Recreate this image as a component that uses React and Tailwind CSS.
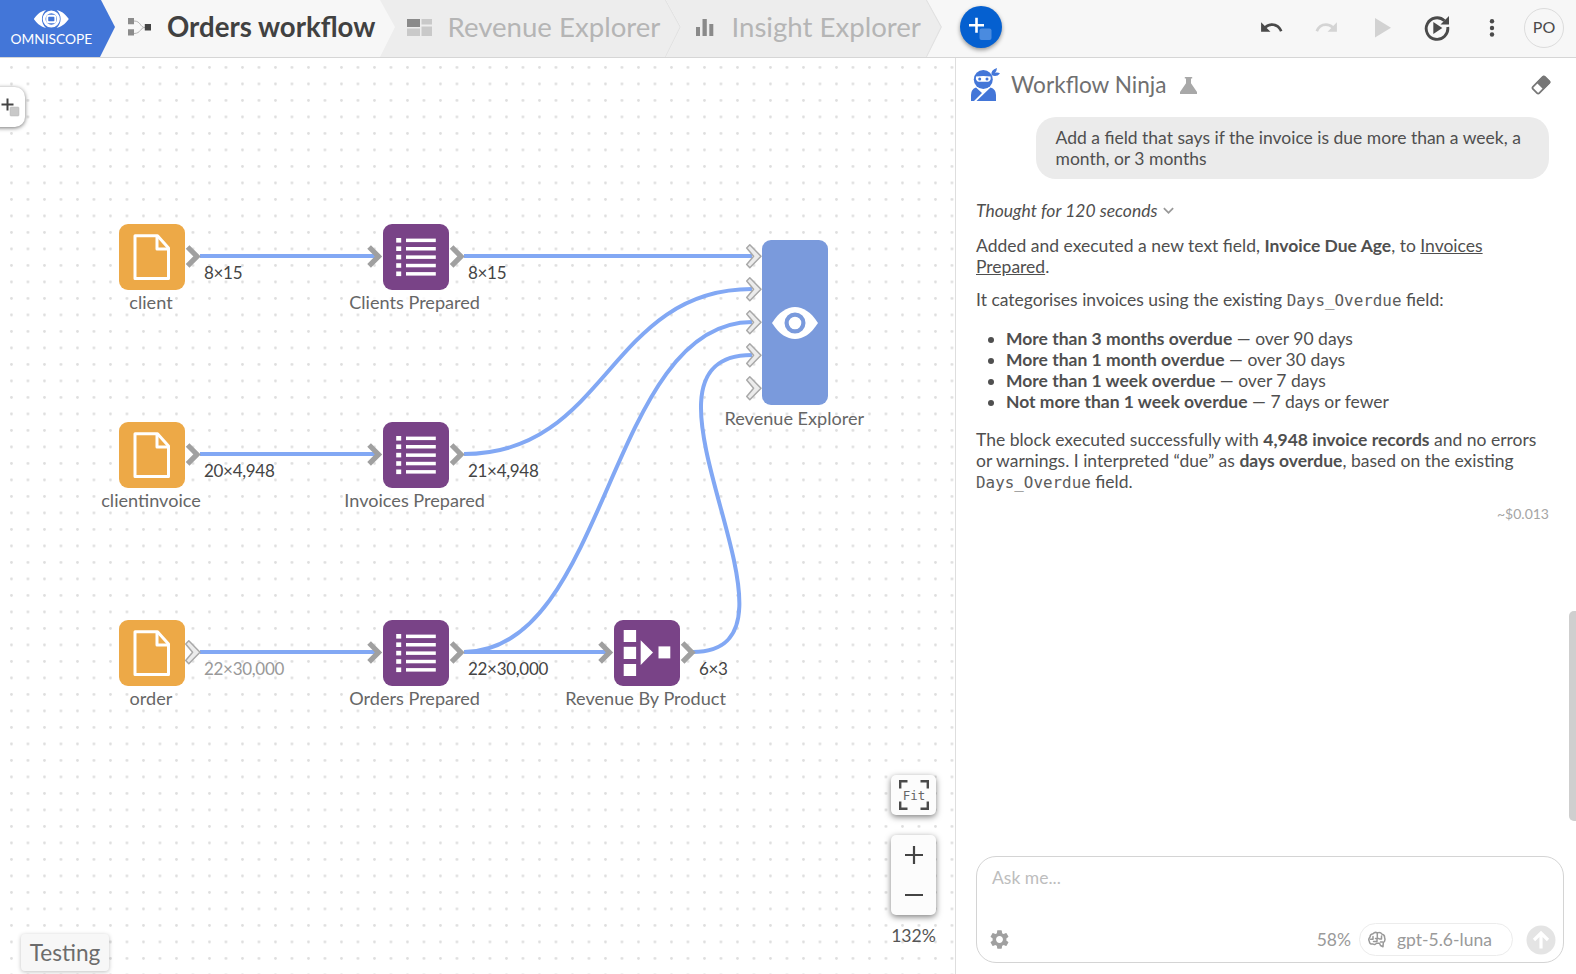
import { MdUndo, MdRedo, MdSettings, MdKeyboardArrowDown } from 'react-icons/md'

const BLUE_LINE = '#82a8f4'

const nodes = [
  { id: 'client', label: 'client', kind: 'file', x: 119, y: 224 },
  { id: 'clientinvoice', label: 'clientinvoice', kind: 'file', x: 119, y: 422 },
  { id: 'order', label: 'order', kind: 'file', x: 119, y: 620 },
  { id: 'clients', label: 'Clients Prepared', kind: 'list', x: 382.6, y: 224 },
  { id: 'invoices', label: 'Invoices Prepared', kind: 'list', x: 382.6, y: 422 },
  { id: 'orders', label: 'Orders Prepared', kind: 'list', x: 382.6, y: 620 },
  { id: 'product', label: 'Revenue By Product', kind: 'aggregate', x: 613.6, y: 620 },
]

const edges = [
  'M200 256H376',
  'M200 454H376',
  'M200 652H376',
  'M464 256H752',
  'M464 652H607',
  'M464 454C608 454 608 289 752 289',
  'M464 652C608 652 608 322 752 322',
  'M693 652C829 652 608 355 752 355',
]

const ports = [
  { x: 186, y: 256 },
  { x: 186, y: 454 },
  { x: 186, y: 652, open: true },
  { x: 367.5, y: 256 },
  { x: 367.5, y: 454 },
  { x: 367.5, y: 652 },
  { x: 450, y: 256 },
  { x: 450, y: 454 },
  { x: 450, y: 652 },
  { x: 598.5, y: 652 },
  { x: 681, y: 652 },
  { x: 747, y: 256, open: true },
  { x: 747, y: 289, open: true },
  { x: 747, y: 322, open: true },
  { x: 747, y: 355, open: true },
  { x: 747, y: 388, open: true },
]

const counts = [
  { text: '8×15', x: 204, y: 262 },
  { text: '20×4,948', x: 204, y: 460 },
  { text: '22×30,000', x: 204, y: 658, faded: true },
  { text: '8×15', x: 468, y: 262 },
  { text: '21×4,948', x: 468, y: 460 },
  { text: '22×30,000', x: 468, y: 658 },
  { text: '6×3', x: 699, y: 658 },
]

function NodeIcon({ kind }) {
  if (kind === 'file') {
    return (
      <svg width="66" height="66" fill="none" stroke="#fff" strokeWidth="3" strokeLinejoin="round">
        <path d="M16 11.7h22.5L49.5 24v30.6H16z" />
        <path d="M38 12v13h11.5" />
      </svg>
    )
  }
  if (kind === 'list') {
    return (
      <svg width="66" height="66" fill="#fff">
        {[14, 22.4, 30.8, 39.2, 47.5].map((y) => (
          <g key={y}>
            <rect x="13.2" y={y} width="5" height="4.6" />
            <rect x="23" y={y + 0.6} width="29.8" height="3.5" />
          </g>
        ))}
      </svg>
    )
  }
  return (
    <svg width="66" height="66" fill="#fff">
      <rect x="9.7" y="10" width="12.4" height="12" />
      <rect x="9.7" y="26.8" width="12.4" height="12.2" />
      <rect x="9.7" y="44" width="12.4" height="12" />
      <path d="M26.7 20.3 39 32.6 26.7 45z" />
      <rect x="44.5" y="26.4" width="11.8" height="12" />
    </svg>
  )
}

function Port({ x, y, open }) {
  if (open) {
    return (
      <path
        transform={`translate(${x} ${y})`}
        d="M2.8 -11.2 14 0.3 2.8 11.8 -0.3 8.6 6.6 0.3 -0.3 -8z"
        fill="#ececec"
        stroke="#a9a9a9"
        strokeWidth="1.5"
        strokeLinejoin="round"
      />
    )
  }
  return (
    <path
      transform={`translate(${x} ${y})`}
      d="M1.6 -9 11 0.4 1.6 9.8"
      fill="none"
      stroke="#a0a0a0"
      strokeWidth="5.2"
    />
  )
}

function AddIcon({ plus, square }) {
  return (
    <svg width="24" height="24" fill="none">
      <path d="M1 9.3h15M8.5 1.8v15" stroke={plus} strokeWidth="2.6" />
      <rect x="11.5" y="12.5" width="12" height="11.500" rx="2" fill={square} />
    </svg>
  )
}

// Right edge of a breadcrumb tab
function TabEdge() {
  return (
    <svg className="absolute right-0 top-0" width="16" height="57" fill="none">
      <path d="M.5 0 15.3 27 .5 57" stroke="#e1e1e1" strokeWidth="1.2" />
    </svg>
  )
}

function Header() {
  return (
    <header className="flex h-[58px] shrink-0 items-start border-b border-[#d6d6d6] bg-[#f7f7f7]">
      <div className="flex h-[57px] w-[115px] shrink-0 flex-col bg-[#4376d8] pl-[10.5px] pt-[9px] text-white [clip-path:polygon(0_0,101px_0,115px_27px,100px_57px,0_57px)]">
        <svg className="ml-[22.5px]" width="36" height="20" viewBox="0 0 36 20" fill="none">
          <path d="M.8 10C5 4.2 9 1.8 13 1c-5.4 5-5.4 13 0 18C9 18.2 5 15.8.8 10zM35.800 10C31.600 4.200 27.600 1.800 23.600 1c5.400 5 5.400 13 0 18 4-.8 8-3.200 12.200-9z" fill="#fff" />
          <circle cx="18.300" cy="10" r="7.200" stroke="#fff" strokeWidth="2.800" />
          <rect x="14.200" y="6.800" width="8.200" height="6.400" rx="1.800" stroke="#fff" strokeWidth="2" />
        </svg>
        <span className="text-[13.75px] leading-[20px]">OMNISCOPE</span>
      </div>

      <div className="relative -ml-[15px] flex h-[57px] w-[295px] shrink-0 items-center pl-[28px]">
        <svg className="-mt-[3px]" width="24" height="20" fill="none">
          <path d="M6 4c7 0 6 6.500 11 6.500M6 16.500c7 0 6-6 11-6" stroke="#b5b5b5" />
          <path d="M0 1h6v6.200H0zM0 12.200h6v6.200H0z" fill="#8c8c8c" />
          <path d="M16.800 7h6.200v6.500h-6.200z" fill="#444" />
        </svg>
        <span className="ml-[15px] self-start whitespace-nowrap text-[27.6px] font-bold leading-[54px] text-[#414141]">Orders workflow</span>
      </div>

      <div className="relative -ml-[15px] flex h-[57px] w-[301px] shrink-0 items-center bg-[#ededed] pl-[27px] [clip-path:polygon(0_0,286px_0,301px_27px,286px_57px,0_57px,15px_27px)]">
        <svg className="-mt-0.5" width="26" height="18">
          <path d="M0 0h13v8H0z" fill="#8a8a8a" />
          <path d="M14.500 0H25v5.500H14.500zM0 9.500h13V17H0zM14.500 7.500H25V17H14.500z" fill="#c9c9c9" />
        </svg>
        <span className="ml-[14.5px] self-start whitespace-nowrap text-[27.6px] leading-[54px] text-[#b5b5b5]">Revenue Explorer</span>
        <TabEdge />
      </div>

      <div className="relative -ml-[15px] flex h-[57px] w-[276px] shrink-0 items-center bg-[#ededed] pl-[30px] [clip-path:polygon(0_0,261px_0,276px_27px,261px_57px,0_57px,15px_27px)]">
        <svg className="-mt-0.5" width="18" height="18" fill="#8a8a8a">
          <path d="M0 8h4v9H0zM6.500 0h4.300v17H6.500zM13.300 5h4v12h-4z" />
        </svg>
        <span className="ml-[17.5px] self-start whitespace-nowrap text-[27.6px] leading-[54px] text-[#b5b5b5]">Insight Explorer</span>
        <TabEdge />
      </div>

      <button className="ml-[18px] mt-[6px] flex size-[42px] items-center justify-center rounded-full bg-[#0560d0] pr-0.5 pt-px shadow-[0_2px_4px_rgba(0,0,0,0.4)]">
        <AddIcon plus="#fff" square="#4a8bdf" />
      </button>

      <div className="ml-auto flex h-[55px] items-center pr-[12px] text-[#4a4a4a]">
        <MdUndo size={25} />
        <MdRedo size={25} className="ml-[30px] text-[#d4d4d4]" />
        <svg className="ml-[36px]" width="16" height="20" fill="#d2d2d2">
          <path d="M0 0 16 9.800 0 19.500z" />
        </svg>
        <svg className="ml-[33px]" width="26" height="26" viewBox="0 0 26 26" fill="none">
          <path d="M20.500 5.800A10.800 10.800 0 1 0 23.700 12" stroke="#4a4a4a" strokeWidth="2.900" />
          <path d="M25 1v8.500h-8.500z" fill="#4a4a4a" />
          <path d="M9.300 7 18.300 13l-9 6z" fill="#4a4a4a" />
        </svg>
        <svg className="ml-[39px]" width="6" height="20" fill="#4a4a4a">
          <circle cx="3" cy="3.300" r="2.200" />
          <circle cx="3" cy="10" r="2.200" />
          <circle cx="3" cy="16.500" r="2.200" />
        </svg>
        <div className="ml-[29px] flex size-[40px] items-center justify-center rounded-full border border-[#dcdcdc] pb-0.5 text-[16px]">PO</div>
      </div>
    </header>
  )
}

function Canvas() {
  return (
    <main className="relative w-[955px] shrink-0 overflow-hidden bg-white">
      <svg className="absolute inset-0" width="955" height="916">
        <defs>
          <pattern id="dots" x="3.200" y="1.200" width="16.500" height="16.500" patternUnits="userSpaceOnUse">
            <circle cx="8.250" cy="8.250" r="1.400" fill="#dedede" />
          </pattern>
        </defs>
        <rect width="955" height="916" fill="url(#dots)" />
        <g transform="translate(0 -58)">
          {edges.map((d) => (
            <path key={d} d={d} fill="none" stroke={BLUE_LINE} strokeWidth="4" />
          ))}
          {ports.map((p) => (
            <Port key={`${p.x}-${p.y}`} {...p} />
          ))}
        </g>
      </svg>

      {/* Workflow blocks; coordinates are measured from the top of the window */}
      <div className="absolute left-0 top-[-58px]">
        {nodes.map((n) => (
          <div key={n.id} className="absolute flex w-[66px] flex-col items-center" style={{ left: n.x, top: n.y }}>
            <div className={`size-[66px] rounded-[9px] ${n.kind === 'file' ? 'bg-[#eda947]' : 'bg-[#794387]'}`}>
              <NodeIcon kind={n.kind} />
            </div>
            <span className="mr-[2px] mt-px whitespace-nowrap bg-white/80 text-[18.1px] leading-[22px] text-[#666]">{n.label}</span>
          </div>
        ))}

        <div className="absolute left-[762.3px] top-[240.4px] flex w-[66px] flex-col items-center">
          <div className="flex h-[165px] w-[66px] items-center justify-center rounded-[9px] bg-[#7a9adc]">
            <svg width="46" height="32" viewBox="0 0 46 32">
              <path d="M0 16C7 5 15 0 23 0s16 5 23 16c-7 11-15 16-23 16S7 27 0 16z" fill="#fff" />
              <circle cx="23" cy="16" r="8.400" fill="#fff" stroke="#7a9adc" strokeWidth="4.200" />
            </svg>
          </div>
          <span className="mr-[2px] mt-[1.5px] whitespace-nowrap text-[18.1px] leading-[22px] text-[#666]">Revenue Explorer</span>
        </div>

        {counts.map((c) => (
          <span
            key={`${c.x}-${c.y}`}
            className={`absolute whitespace-nowrap text-[17px] leading-[22px] tracking-[-0.3px] ${c.faded ? 'text-[#999]' : 'text-[#444]'}`}
            style={{ left: c.x, top: c.y }}
          >
            {c.text}
          </span>
        ))}
      </div>

      <button className="absolute -left-3 top-[29px] flex h-[40px] w-[37px] items-center rounded-[10px] bg-white pl-[13px] shadow-[0_1px_4px_rgba(0,0,0,0.55)]">
        <svg width="19" height="20" fill="none">
          <path d="M.5 7.500h12M6.500 1.500v12" stroke="#444" strokeWidth="2" />
          <rect x="9" y="10" width="9" height="9" rx="1" fill="#c8c8c8" stroke="#b5b5b5" strokeWidth=".5" />
        </svg>
      </button>

      <div className="absolute bottom-[3px] left-[21px] flex h-[37px] w-[88px] items-center justify-center rounded-[4px] bg-[#f7f7f7] text-[22.6px] text-[#6c6c6c] shadow-[0_1px_4px_rgba(0,0,0,0.25)]">
        Testing
      </div>

      <div className="absolute left-[891px] top-[717px] flex w-[45px] flex-col items-center">
        <button className="relative flex h-[40px] w-[45px] items-center justify-center rounded-[5px] bg-[#fcfcfc] shadow-[0_2px_6px_rgba(0,0,0,0.5)]">
          <svg className="absolute left-2 top-[5px]" width="30" height="30" fill="none" stroke="#4a4a4a" strokeWidth="2.400">
            <path d="M1.200 8.500V1.200h7.300M21.500 1.200h7.300v7.300M28.800 21.500v7.300h-7.300M8.500 28.800H1.200v-7.300" />
          </svg>
          <span className="pl-px pt-0.5 font-['DejaVu_Sans_Mono','Liberation_Mono',monospace] text-[12.5px] text-[#666]">Fit</span>
        </button>
        <div className="mt-[20px] flex h-[80px] w-[45px] flex-col items-center rounded-[5px] bg-[#fcfcfc] pt-[11px] shadow-[0_2px_6px_rgba(0,0,0,0.5)]">
          <svg width="18" height="52" fill="none" stroke="#444" strokeWidth="2.200">
            <path d="M0 9h18M9 0v18M0 49h18" />
          </svg>
        </div>
        <span className="mt-[10px] text-[17.600px] leading-[22px] text-[#555]">132%</span>
      </div>
    </main>
  )
}

function NinjaIcon() {
  return (
    <svg width="30" height="34" viewBox="0 0 30 34" fill="#4376d8">
      <circle cx="12.300" cy="11.500" r="9.500" />
      <path d="M5 8.600q7.300-1.400 14.600 0 .6 4.600-2.600 5.200H7.600Q4.400 13.200 5 8.600z" fill="#fff" />
      <circle cx="8.700" cy="11" r="1.500" />
      <circle cx="16" cy="11" r="1.500" />
      <path d="M20.500 7q-1-5 5.500-7-.2 3-2 4.800 3-.6 5 .6-3.500 4-8.500 1.600z" />
      <path d="M0 33v-6q0-6 5-7.500l6 5.500-8 8zM5.500 33 19.500 19.500Q25 21 25 27v6z" />
    </svg>
  )
}

function Code({ children }) {
  return <code className="font-['DejaVu_Sans_Mono','Liberation_Mono',monospace] text-[15.9px] leading-[20px] text-[#5c5c5c]">{children}</code>
}

function Chat() {
  return (
    <aside className="relative flex min-w-0 flex-1 flex-col border-l border-[#dedede] bg-white text-[17.5px] leading-[21px] text-[#4f4f4f]">
      <div className="flex h-[54px] shrink-0 items-center pl-[15px] pr-[25px]">
        <NinjaIcon />
        <span className="-mt-px ml-[10px] text-[22.6px] text-[#707070]">Workflow Ninja</span>
        <svg className="ml-[14px] mt-[1px]" width="17" height="17" fill="#a8a8a8">
          <path d="M4.800 0h7.400v1.500H11v4.800L17 15v2H0v-2L6 6.300V1.500H4.800z" />
        </svg>
        <svg className="ml-auto" width="20" height="20" viewBox="0 0 20 20">
          <g transform="rotate(-45 10 10)">
            <rect x="1.500" y="5.500" width="17" height="9" rx="1.500" fill="#fff" stroke="#777" strokeWidth="1.800" />
            <path d="M8.500 5h9a1.500 1.500 0 0 1 1.500 1.500v7a1.500 1.500 0 0 1-1.500 1.500h-9z" fill="#777" />
          </g>
        </svg>
      </div>

      <div className="flex flex-1 flex-col pl-5 pr-[27px] pt-[5px]">
        <div className="ml-auto w-[513px] rounded-[20px] bg-[#ebebeb] py-[10px] pl-[19.5px] pr-[18px]">
          Add a field that says if the invoice is due more than a week, a month, or 3 months
        </div>

        <div className="mt-[21px] flex h-[21px] items-center italic">
          Thought for 120 seconds
          <MdKeyboardArrowDown size={21} className="ml-px text-[#999]" />
        </div>

        <p className="mt-[14px]">
          Added and executed a new text field, <b>Invoice Due Age</b>, to <span className="underline">Invoices Prepared</span>.
        </p>
        <p className="mt-3">
          It categorises invoices using the existing <Code>Days_Overdue</Code> field:
        </p>
        <ul className="mt-[17px] list-disc pl-[30px]">
          <li><b>More than 3 months overdue</b> — over 90 days</li>
          <li><b>More than 1 month overdue</b> — over 30 days</li>
          <li><b>More than 1 week overdue</b> — over 7 days</li>
          <li><b>Not more than 1 week overdue</b> — 7 days or fewer</li>
        </ul>
        <p className="mt-[17px]">
          The block executed successfully with <b>4,948 invoice records</b> and no errors or warnings. I interpreted “due” as <b>days overdue</b>, based on the existing <Code>Days_Overdue</Code> field.
        </p>
        <span className="mt-[10px] self-end text-[14px] text-[#a5a5a5]">~$0.013</span>
      </div>

      <div className="mb-[11px] ml-5 mr-[12px] flex h-[107px] shrink-0 flex-col justify-between rounded-[20px] border border-[#d4d4d4] pb-[6px] pl-[13px] pr-[7px] pt-[10px]">
        <span className="pl-[2px] text-[#bdbdbd]">Ask me...</span>
        <div className="flex items-center text-[#9a9a9a]">
          <MdSettings size={23} className="-ml-[2px] text-[#a0a0a0]" />
          <span className="ml-auto">58%</span>
          <div className="ml-2 flex h-[33px] w-[154px] items-center rounded-full border border-[#ececec] pl-[8px]">
            <svg width="18" height="18" viewBox="0 0 18 18" fill="none" stroke="#999" strokeWidth="1.500" strokeLinecap="round" strokeLinejoin="round">
              <path d="M5 13Q1.500 13.500 1.300 10.300 0 8 2 6 2 3 5 2.700q2-2.200 4.300-.8 3-1.200 4.700 1.300 2.800.5 2.600 3.500 1.200 3-1.300 5l-.3 4-2.500-1.200-1-2.300H8.500Q7 14.500 5 13z" />
              <path d="M5 5.500v2.700H2.500M9.300 2v4.200M7.500 7.500h3.200M13.500 5v3h-2M5.500 10.500H9v-2M12.500 11h2" />
            </svg>
            <span className="ml-[11px]">gpt-5.6-luna</span>
          </div>
          <svg className="ml-[13px]" width="30" height="30" fill="none">
            <circle cx="15" cy="15" r="14.500" fill="#e4e4e4" />
            <path d="M15 23.500V8.500M8 15l7-7 7 7" stroke="#fff" strokeWidth="3.200" />
          </svg>
        </div>
      </div>

      <div className="absolute right-0 top-[553px] h-[210px] w-[7px] rounded-l-[5px] bg-[#cfcfcf]" />
    </aside>
  )
}

export default function App() {
  return (
    <div className="flex h-[974px] w-[1576px] flex-col overflow-hidden bg-white font-[Lato,sans-serif]">
      <Header />
      <div className="flex min-h-0 flex-1">
        <Canvas />
        <Chat />
      </div>
    </div>
  )
}
